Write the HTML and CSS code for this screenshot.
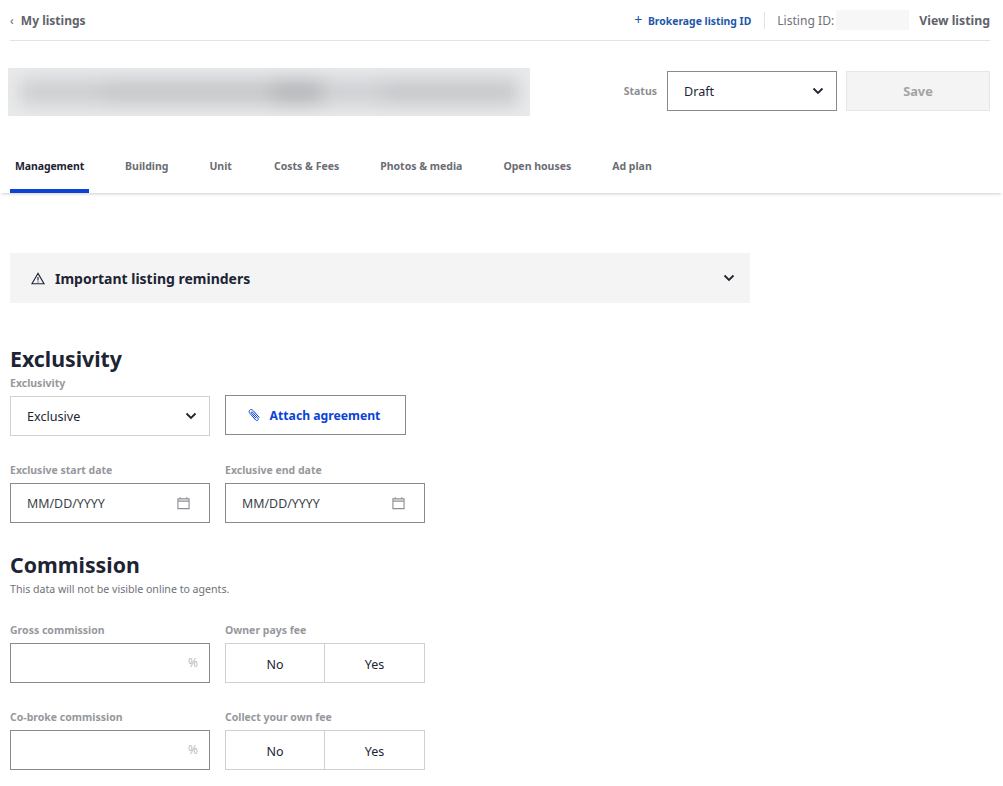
FILE: index.html
```html
<!DOCTYPE html>
<html lang="en">
<head>
  <meta charset="UTF-8" />
  <title>Edit listing</title>
  <link rel="stylesheet" href="styles.css">
</head>
<body>
  <header class="top-bar">
    <a class="back-link"><span class="back-arrow">‹</span> My listings</a>
    <div class="top-actions">
      <a class="brokerage-link"><span class="plus">+</span> Brokerage listing ID</a>
      <span class="listing-id">Listing ID:<span class="listing-id-value"></span></span>
      <a class="view-link">View listing</a>
    </div>
  </header>

  <div class="title-row">
    <div class="title-blur">
      <div class="blur-inner">
        <span class="blur-a"></span>
        <span class="blur-b"></span>
        <span class="blur-c"></span>
        <span class="blur-d"></span>
        <span class="blur-e"></span>
      </div>
    </div>
    <div class="status-group">
      <span class="status-label">Status</span>
      <div class="select status-select">
        <span>Draft</span>
        <svg class="chevron" viewBox="0 0 12 8"><path d="M1.5 1.5 6 6l4.5-4.5" /></svg>
      </div>
      <button class="save-btn">Save</button>
    </div>
  </div>

  <nav class="tabs">
    <a class="tab active">Management</a>
    <a class="tab">Building</a>
    <a class="tab">Unit</a>
    <a class="tab">Costs &amp; Fees</a>
    <a class="tab">Photos &amp; media</a>
    <a class="tab">Open houses</a>
    <a class="tab">Ad plan</a>
  </nav>

  <main class="content">
    <div class="reminders">
      <div class="reminders-title">
        <svg class="warn-icon" viewBox="0 0 16 15"><path d="M8 1.6 15 13.6H1Z" /><path d="M8 5.800v4M8 11v1.200" /></svg>
        Important listing reminders
      </div>
      <svg class="chevron" viewBox="0 0 12 8"><path d="M1.5 1.5 6 6l4.5-4.5" /></svg>
    </div>

    <h2>Exclusivity</h2>
    <div class="field-label first-label">Exclusivity</div>
    <div class="row">
      <div class="select light">
        <span>Exclusive</span>
        <svg class="chevron" viewBox="0 0 12 8"><path d="M1.5 1.5 6 6l4.5-4.5" /></svg>
      </div>
      <button class="attach-btn">
        <svg class="clip-icon" viewBox="0 0 14 14"><path d="M12.400 9.600 6.200 2.600C5.200 1.400 3.700 1.300 2.800 2.100 1.900 2.900 1.900 4.300 2.900 5.400l5.600 6.400c.7.8 1.700.9 2.300.4.6-.5.6-1.500-.1-2.300L5.600 4.200c-.4-.4-.9-.5-1.200-.2-.3.3-.3.8.1 1.200l4.600 5.200" /></svg>
        Attach agreement
      </button>
    </div>

    <div class="row form-row">
      <div class="field">
        <div class="field-label">Exclusive start date</div>
        <div class="input">
          <span>MM/DD/YYYY</span>
          <svg class="cal-icon" viewBox="0 0 14 14"><path d="M1 2.500h12v10.500H1ZM1 5h12M3.500 .8v2M10.500 .8v2" /></svg>
        </div>
      </div>
      <div class="field">
        <div class="field-label">Exclusive end date</div>
        <div class="input">
          <span>MM/DD/YYYY</span>
          <svg class="cal-icon" viewBox="0 0 14 14"><path d="M1 2.500h12v10.500H1ZM1 5h12M3.500 .8v2M10.500 .8v2" /></svg>
        </div>
      </div>
    </div>

    <h2 class="commission-title">Commission</h2>
    <p class="note">This data will not be visible online to agents.</p>

    <div class="row commission-row">
      <div class="field">
        <div class="field-label">Gross commission</div>
        <div class="input"><span></span><span class="percent">%</span></div>
      </div>
      <div class="field">
        <div class="field-label">Owner pays fee</div>
        <div class="toggle"><span>No</span><span>Yes</span></div>
      </div>
    </div>

    <div class="row form-row-tight">
      <div class="field">
        <div class="field-label">Co-broke commission</div>
        <div class="input"><span></span><span class="percent">%</span></div>
      </div>
      <div class="field">
        <div class="field-label">Collect your own fee</div>
        <div class="toggle"><span>No</span><span>Yes</span></div>
      </div>
    </div>
  </main>
</body>
</html>
```

FILE: styles.css
```css
* {
  margin: 0;
  padding: 0;
  box-sizing: border-box;
  font-family: 'Noto Sans', 'Open Sans', sans-serif;
}

body {
  background-color: #fff;
  color: #1d2433;
  height: 786px;
  overflow: hidden;
}

svg {
  fill: none;
  stroke: currentColor;
  flex-shrink: 0;
}

.top-bar {
  margin: 0 13px 0 10px;
  height: 41px;
  border-bottom: 1px solid #e3e3e3;
  display: flex;
  align-items: center;
  justify-content: space-between;
}

.back-link {
  font-size: 12px;
  font-weight: 700;
  color: #5f636b;
}

.back-arrow {
  font-weight: 400;
  margin-right: 4px;
}

.top-actions {
  display: flex;
  align-items: center;
}

.brokerage-link {
  font-size: 10.4px;
  font-weight: 700;
  color: #1d57a8;
  padding-right: 13px;
  border-right: 1px solid #e3e3e3;
  line-height: 15px;
}

.plus {
  font-weight: 400;
  font-size: 14px;
  line-height: 15px;
  margin-right: 3px;
}

.listing-id {
  font-size: 12.1px;
  color: #6d7178;
  margin-left: 12px;
  display: flex;
  align-items: center;
}

.listing-id-value {
  width: 73px;
  height: 20px;
  background-color: #f7f7f7;
  margin-left: 2px;
}

.view-link {
  font-size: 12.3px;
  font-weight: 700;
  color: #5f636b;
  margin-left: 10px;
}

.title-row {
  margin: 27px 13px 0 8px;
  height: 48px;
  display: flex;
  align-items: flex-start;
  justify-content: space-between;
}

.title-blur {
  width: 522px;
  height: 48px;
  background-color: #e9eaeb;
  overflow: hidden;
}

.blur-inner {
  display: flex;
  height: 100%;
  padding: 11px 12px;
  filter: blur(9px);
}

.blur-a {
  width: 82px;
  background-color: #cdced1;
}

.blur-b {
  width: 170px;
  background-color: #c6c7ca;
}

.blur-c {
  width: 50px;
  background-color: #b6b7ba;
}

.blur-d {
  width: 60px;
  background-color: #cfd0d3;
}

.blur-e {
  flex-grow: 1;
  background-color: #c7c8cb;
}

.status-group {
  display: flex;
  align-items: center;
  padding-top: 3px;
}

.status-label {
  font-size: 10.5px;
  font-weight: 700;
  color: #8d8f93;
  margin-right: 10px;
}

.select {
  width: 200px;
  height: 40px;
  padding: 0 12px 0 16px;
  border: 1px solid #d0d0d0;
  display: flex;
  align-items: center;
  justify-content: space-between;
  font-size: 12.6px;
}

.status-select {
  width: 170px;
  border-color: #8a8a8a;
}

.chevron {
  width: 12px;
  height: 8px;
  stroke-width: 1.8;
  color: #1d2433;
}

.save-btn {
  width: 144px;
  height: 40px;
  margin-left: 9px;
  background-color: #f4f4f4;
  border: 1px solid #e6e6e6;
  font-size: 12.8px;
  font-weight: 700;
  color: #a3a3a3;
}

.tabs {
  margin-top: 27px;
  height: 50px;
  padding-left: 10px;
  display: flex;
  gap: 31px;
  box-shadow: 0 3px 3px -2px rgba(0, 0, 0, 0.2);
}

.tab {
  padding: 16px 5px 0;
  font-size: 10.5px;
  font-weight: 700;
  color: #6a6d73;
  border-bottom: 4px solid transparent;
}

.tab:nth-child(3) {
  margin-right: 1px;
}

.tab.active {
  color: #1d2433;
  letter-spacing: -0.1px;
  border-bottom-color: #0b43d6;
}

.content {
  padding: 60px 0 0 10px;
}

.reminders {
  width: 740px;
  height: 50px;
  padding: 0 15px 0 21px;
  background-color: #f4f4f4;
  display: flex;
  align-items: center;
  justify-content: space-between;
}

.reminders-title {
  display: flex;
  align-items: center;
  gap: 10px;
  font-size: 14px;
  font-weight: 700;
}

.warn-icon {
  width: 14px;
  height: 13px;
  stroke-width: 1.3;
}

h2 {
  font-size: 21.3px;
  font-weight: 700;
  line-height: 30px;
  margin-top: 41px;
}

.field-label {
  font-size: 10.5px;
  font-weight: 700;
  color: #96989c;
  line-height: 14px;
  margin-bottom: 6px;
}

.first-label {
  margin: 2px 0 6px;
}

.row {
  display: flex;
  gap: 15px;
  align-items: flex-start;
}

.attach-btn {
  width: 181px;
  height: 40px;
  margin-top: -1px;
  padding-right: 4px;
  background-color: #fff;
  border: 1px solid #8a8a8a;
  font-size: 12.2px;
  font-weight: 700;
  color: #0b43d6;
  display: flex;
  align-items: center;
  justify-content: center;
  gap: 9px;
}

.clip-icon {
  width: 14px;
  height: 14px;
  stroke-width: 1;
}

.form-row {
  margin-top: 27px;
}

.input {
  width: 200px;
  height: 40px;
  padding: 0 12px 0 16px;
  border: 1px solid #8a8a8a;
  display: flex;
  align-items: center;
  justify-content: space-between;
  font-size: 12.4px;
  color: #3a3f49;
}

.cal-icon {
  width: 13px;
  height: 14px;
  stroke-width: 1.2;
  color: #8d8f93;
  margin-right: 7px;
}

.percent {
  font-size: 12px;
  color: #bbb;
  margin: -2px -1px 0 0;
}

h2.commission-title {
  margin-top: 27px;
}

.note {
  font-size: 10.6px;
  color: #6d7178;
  line-height: 14px;
  margin-top: 2px;
}

.commission-row {
  margin-top: 27px;
}

.form-row-tight {
  margin-top: 27px;
}

.toggle {
  width: 200px;
  height: 40px;
  border: 1px solid #d0d0d0;
  display: flex;
  font-size: 12.5px;
  color: #1d2433;
}

.toggle span {
  flex: 1;
  display: flex;
  align-items: center;
  justify-content: center;
  padding-top: 2px;
}

.toggle span:first-child {
  flex: 0 0 98px;
}

.toggle span + span {
  border-left: 1px solid #d0d0d0;
}
```
